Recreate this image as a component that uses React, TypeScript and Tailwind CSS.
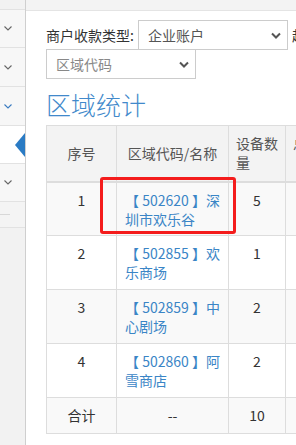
import React from 'react'

const font = { fontFamily: '"Noto Sans CJK SC", "Open Sans", sans-serif' }

function Chevron({ color }: { color: string }) {
  return (
    <svg width="8" height="5" viewBox="0 0 8 5" className="ml-[4px]">
      <polyline points="0.5,0.5 4,4 7.5,0.5" fill="none" stroke={color} strokeWidth="1.1" />
    </svg>
  )
}

function SelectArrow() {
  return (
    <svg width="10" height="7" viewBox="0 0 10 7">
      <polyline points="1,1.5 5,5.5 9,1.5" fill="none" stroke="#555" strokeWidth="2" />
    </svg>
  )
}

const rows = [
  { no: '1', code: '502620', name: '深圳市欢乐谷', count: '5' },
  { no: '2', code: '502855', name: '欢乐商场', count: '1' },
  { no: '3', code: '502859', name: '中心剧场', count: '2' },
  { no: '4', code: '502860', name: '阿雪商店', count: '2' },
]

export default function App() {
  return (
    <div className="flex h-[445px] w-[296px] overflow-hidden bg-white text-[14px] text-[#333]" style={font}>
      {/* side menu */}
      <aside className="w-[26px] shrink-0 bg-[#f2f2f2] border-r border-[#cfcfcf] flex flex-col">
        <div className="h-[10px] border-b border-[#e2e2e2]" />
        <div className="h-[38px] bg-[#f7f7f7] border-b border-[#e2e2e2] flex items-center"><Chevron color="#666" /></div>
        <div className="h-[39px] bg-[#f7f7f7] border-b border-[#e2e2e2] flex items-center"><Chevron color="#666" /></div>
        <div className="h-[39px] bg-[#f7f7f7] border-b border-[#e2e2e2] flex items-center"><Chevron color="#3a7bc0" /></div>
        <div className="h-[38px] bg-white border-b border-[#e2e2e2] flex items-center justify-end">
          <div className="w-0 h-0 border-y-[12px] border-y-transparent border-r-[10px] border-r-[#2a7bc4]" />
        </div>
        <div className="h-[38px] bg-[#f7f7f7] border-b border-[#e2e2e2] flex items-center"><Chevron color="#666" /></div>
        <div className="h-[26px] bg-[#f4f4f4] border-b border-[#e2e2e2] flex items-center">
          <div className="h-px w-[10px] bg-[#d8d8d8]" />
        </div>
      </aside>

      <main className="flex-1 min-w-0 flex flex-col">
        <div className="h-[11px] shrink-0 bg-[#f3f3f3] border-b border-[#e4e4e4]" />
        <div className="relative pl-[20px] pt-[9px] whitespace-nowrap">
          <div className="flex items-center">
            <span className="shrink-0 mr-[4px]">商户收款类型:</span>
            <div className="shrink-0 w-[150px] h-[30px] border border-[#ccc] flex items-center justify-between pl-[9px] pr-[6px] text-[#555]">
              <span>企业账户</span>
              <SelectArrow />
            </div>
            <span className="shrink-0 ml-[4px]">起</span>
          </div>
          <div className="w-[150px] h-[30px] border border-[#ccc] -mt-px flex items-center justify-between pl-[9px] pr-[6px] text-[#888]">
            <span>区域代码</span>
            <SelectArrow />
          </div>
          <h3 className="text-[25px] leading-[28px] font-light text-[#4189cb] mt-[11px] mb-[7px]">区域统计</h3>

          <table className="border-collapse border border-[#ddd] w-max table-fixed leading-[19px]">
            <colgroup>
              <col className="w-[70px]" />
              <col className="w-[112px]" />
              <col className="w-[56px]" />
              <col className="w-[80px]" />
            </colgroup>
            <thead>
              <tr className="bg-[#f3f3f3] text-[#555] h-[56px]">
                <th className="border border-[#ddd] border-b-2 font-normal px-[8px] py-[8px] text-center">序号</th>
                <th className="border border-[#ddd] border-b-2 font-normal px-[8px] py-[8px] text-center">区域代码/名称</th>
                <th className="border border-[#ddd] border-b-2 font-normal px-[7px] py-[8px] text-left">
                  <div>设备数</div>
                  <div>量</div>
                </th>
                <th className="border border-[#ddd] border-b-2 font-normal px-[7px] py-[8px] text-left align-top">总</th>
              </tr>
            </thead>
            <tbody>
              {rows.map((r, i) => (
                <tr key={r.no} className={i % 2 === 0 ? 'bg-[#f9f9f9] h-[54px]' : 'bg-white h-[54px]'}>
                  <td className="border border-[#ddd] px-[8px] pt-[8px] align-top text-center">{r.no}</td>
                  <td className="border border-[#ddd] px-[8px] pt-[8px] align-top text-[#3a85c6] whitespace-normal break-all">
                    【 {r.code} 】{r.name}
                  </td>
                  <td className="border border-[#ddd] px-[8px] pt-[8px] align-top text-center">{r.count}</td>
                  <td className="border border-[#ddd] px-[8px] pt-[8px] align-top"></td>
                </tr>
              ))}
              <tr className="bg-[#f9f9f9] h-[36px]">
                <td className="border border-[#ddd] px-[8px] text-center">合计</td>
                <td className="border border-[#ddd] px-[8px] text-center">--</td>
                <td className="border border-[#ddd] px-[8px] text-center">10</td>
                <td className="border border-[#ddd] px-[8px]"></td>
              </tr>
            </tbody>
          </table>

          {/* annotation box */}
          <div className="absolute left-[74px] top-[166px] w-[136px] h-[57px] border-[3px] border-[#f41c1c] rounded-[3px]" />
        </div>
      </main>
    </div>
  )
}
